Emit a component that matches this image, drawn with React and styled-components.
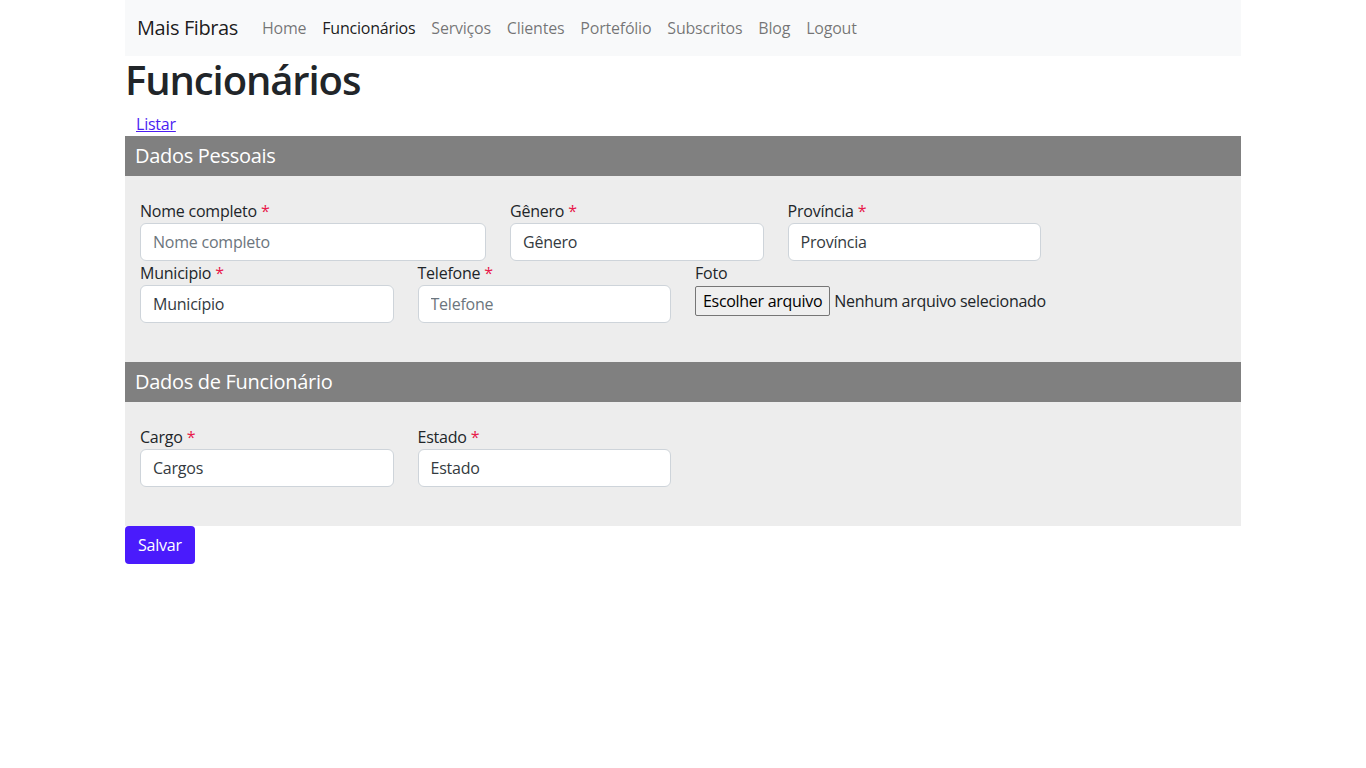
import React from "react"
import styled, { createGlobalStyle } from "styled-components"

const GlobalStyle = createGlobalStyle`
  body {
    margin: 0;
    background: #fff;
    color: #212529;
    font-family: "Open Sans", "Noto Sans", sans-serif;
    font-size: 16px;
    line-height: 1.5;
    letter-spacing: -0.22px;
  }
  * { box-sizing: border-box; }
`

const Container = styled.div`
  width: 1116px;
  margin: 0 auto;
`

const Navbar = styled.nav`
  height: 56px;
  background: #f8f9fa;
  display: flex;
  align-items: center;
  padding: 0 12px;
`

const Brand = styled.a`
  font-size: 20px;
  line-height: 30px;
  color: rgba(0, 0, 0, 0.9);
  text-decoration: none;
  margin-right: 16px;
  letter-spacing: -0.4px;
`

const NavList = styled.div`
  display: flex;
`

const NavLink = styled.a`
  padding: 8px;
  color: ${(p) => (p.active ? "rgba(0, 0, 0, 0.9)" : "rgba(0, 0, 0, 0.55)")};
  text-decoration: none;
`

const Title = styled.h1`
  margin: 0 0 8px;
  font-size: 40px;
  font-weight: 600;
  line-height: 48px;
  letter-spacing: -1.1px;
`

const BackLink = styled.a`
  display: inline-block;
  margin-left: 11px;
  color: #4b1df2;
  text-decoration: underline;
`

const SectionHeader = styled.div`
  height: 40px;
  background: #808080;
  color: #fff;
  font-size: 20px;
  line-height: 40px;
  padding: 0 10px;
  letter-spacing: -0.3px;
`

const SectionBody = styled.div`
  background: #ededed;
  padding: 23px 15px 39px;
`

const FieldRow = styled.div`
  display: grid;
  grid-template-columns: repeat(12, 1fr);
  column-gap: 24px;
`

const Field = styled.div`
  grid-column: span ${(p) => p.span || 3};
  display: flex;
  flex-direction: column;
  align-items: flex-start;
`

const Label = styled.label`
  line-height: 24px;
`

const Required = styled.span`
  color: #e8174a;
`

const Input = styled.input`
  width: 100%;
  height: 38px;
  padding: 6px 12px;
  border: 1px solid #ced4da;
  border-radius: 6px;
  background: #fff;
  font: inherit;
  letter-spacing: inherit;
  color: #343a40;
  &::placeholder {
    color: #6c757d;
  }
`

const FileWrap = styled.div`
  display: flex;
  align-items: center;
  margin-top: 1px;
  white-space: nowrap;
  letter-spacing: -0.3px;
`

const FileButton = styled.button`
  height: 30px;
  padding: 0 7px;
  border: 1px solid #767676;
  border-radius: 2px;
  background: #efefef;
  font: inherit;
  letter-spacing: inherit;
  color: #000;
  margin-right: 4px;
`

const SaveButton = styled.button`
  height: 38px;
  padding: 0 13px;
  border: none;
  border-radius: 4px;
  background: #4a1bfc;
  color: #fff;
  font: inherit;
  letter-spacing: inherit;
`

const Req = ({ children }) => (
  <Label>
    {children} <Required>*</Required>
  </Label>
)

export default function App() {
  const links = ["Home", "Funcionários", "Serviços", "Clientes", "Portefólio", "Subscritos", "Blog", "Logout"]
  return (
    <>
      <GlobalStyle />
      <Container>
        <Navbar>
          <Brand href="#">Mais Fibras</Brand>
          <NavList>
            {links.map((l) => (
              <NavLink key={l} href="#" active={l === "Funcionários" ? 1 : 0}>
                {l}
              </NavLink>
            ))}
          </NavList>
        </Navbar>
        <Title>Funcionários</Title>
        <BackLink href="#">Listar</BackLink>

        <SectionHeader>Dados Pessoais</SectionHeader>
        <SectionBody>
          <FieldRow>
            <Field span={4}>
              <Req>Nome completo</Req>
              <Input placeholder="Nome completo" />
            </Field>
            <Field>
              <Req>Gênero</Req>
              <Input defaultValue="Gênero" />
            </Field>
            <Field>
              <Req>Província</Req>
              <Input defaultValue="Província" />
            </Field>
          </FieldRow>
          <FieldRow>
            <Field>
              <Req>Municipio</Req>
              <Input defaultValue="Município" />
            </Field>
            <Field>
              <Req>Telefone</Req>
              <Input placeholder="Telefone" />
            </Field>
            <Field>
              <Label>Foto</Label>
              <FileWrap>
                <FileButton type="button">Escolher arquivo</FileButton>
                <span>Nenhum arquivo selecionado</span>
              </FileWrap>
            </Field>
          </FieldRow>
        </SectionBody>

        <SectionHeader>Dados de Funcionário</SectionHeader>
        <SectionBody>
          <FieldRow>
            <Field>
              <Req>Cargo</Req>
              <Input defaultValue="Cargos" />
            </Field>
            <Field>
              <Req>Estado</Req>
              <Input defaultValue="Estado" />
            </Field>
          </FieldRow>
        </SectionBody>

        <SaveButton type="button">Salvar</SaveButton>
      </Container>
    </>
  )
}
